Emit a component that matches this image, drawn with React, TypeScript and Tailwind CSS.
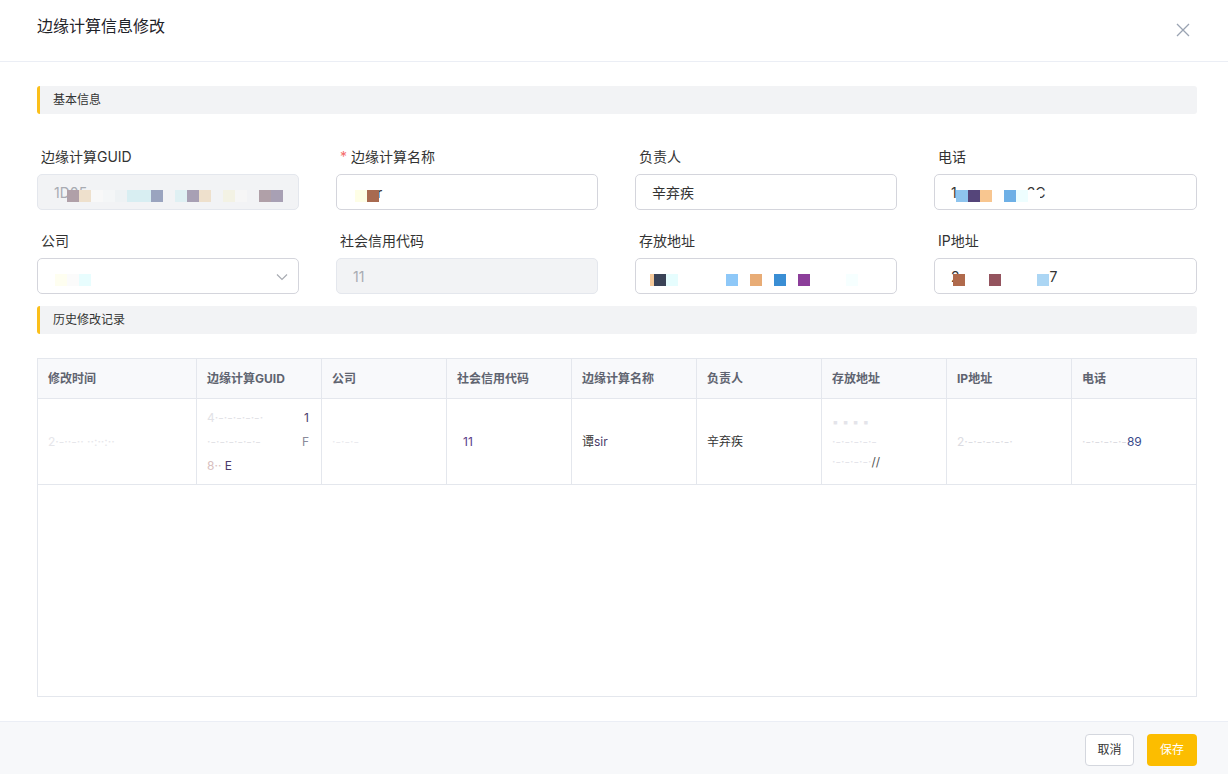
import React from "react";

const font = { fontFamily: '"Inter","Noto Sans CJK SC","Noto Sans",sans-serif' };

type Blk = [number, string];

function Mosaic({ start, blocks }: { start: number; blocks: Blk[] }) {
  return (
    <>
      {blocks.map(([x, c], i) => (
        <span
          key={i}
          className="absolute top-[15px] h-[12px] w-[12px]"
          style={{ left: x - start, backgroundColor: c }}
        />
      ))}
    </>
  );
}

function SectionTitle({ children }: { children: React.ReactNode }) {
  return (
    <div className="flex h-[28px] items-center rounded-[3px] border-l-[3px] border-[#fbbf1a] bg-[#f2f3f5] pl-[13px] text-[12px] text-[#333]">
      {children}
    </div>
  );
}

function Field({
  label,
  required,
  disabled,
  children,
  select,
}: {
  label: string;
  required?: boolean;
  disabled?: boolean;
  children?: React.ReactNode;
  select?: boolean;
}) {
  return (
    <div className="flex flex-col">
      <div className="flex h-[20px] items-center pl-[4px] text-[14px] text-[#333]">
        {required && <span className="mr-[4px] text-[#f56c6c]">*</span>}
        {label}
      </div>
      <div
        className={
          "relative mt-[8px] flex h-[36px] items-center rounded-[5px] border pl-[16px] text-[14px] " +
          (disabled ? "border-[#e4e7ed] bg-[#f2f3f5] text-[#a8abb2]" : "border-[#d4d5dc] bg-white text-[#333]")
        }
      >
        {children}
        {select && (
          <svg className="absolute right-[10px] top-[14px]" width="12" height="8" viewBox="0 0 12 8">
            <path d="M1 1.5 L6 6.5 L11 1.5" fill="none" stroke="#a8abb2" strokeWidth="1.2" />
          </svg>
        )}
      </div>
    </div>
  );
}

const heads = ["修改时间", "边缘计算GUID", "公司", "社会信用代码", "边缘计算名称", "负责人", "存放地址", "IP地址", "电话"];

export default function App() {
  return (
    <div className="flex h-[774px] w-[1228px] flex-col bg-white" style={font}>
      {/* header */}
      <div className="flex h-[62px] shrink-0 items-start justify-between border-b border-[#ebeef5] pl-[37px] pr-[38px] pt-[15px]">
        <div className="text-[16px] leading-[22px] text-[#1f2329]">边缘计算信息修改</div>
        <svg className="mt-[8px]" width="14" height="14" viewBox="0 0 14 14">
          <path d="M1 1 L13 13 M13 1 L1 13" stroke="#9aa3b2" strokeWidth="1.3" />
        </svg>
      </div>

      {/* body */}
      <div className="flex flex-1 flex-col pl-[37px] pr-[31px] pt-[24px]">
        <SectionTitle>基本信息</SectionTitle>

        <div className="mt-[32px] grid grid-cols-[262px_262px_262px_263px] gap-x-[37px] gap-y-[20px]">
          <Field label="边缘计算GUID" disabled>
            <span>1D05</span>
            <Mosaic
              start={37}
              blocks={[
                [66, "#b0a0a8"],
                [78, "#eee0cc"],
                [90, "#f8f8f8"],
                [102, "#f4f6f7"],
                [114, "#eef2f4"],
                [126, "#d8eef2"],
                [138, "#d8eef2"],
                [150, "#9aa4bf"],
                [162, "#f2f3f5"],
                [174, "#dff0f3"],
                [186, "#a8a0b4"],
                [198, "#eee0cc"],
                [210, "#f2f3f5"],
                [222, "#f3f2e4"],
                [234, "#f6f6f6"],
                [246, "#f2f3f5"],
                [258, "#b0a0a8"],
                [270, "#a8a0b4"],
              ]}
            />
          </Field>
          <Field label="边缘计算名称" required>
            <span className="pl-[24px]">r</span>
            <Mosaic start={336} blocks={[[354, "#fefee6"], [366, "#a86a50"]]} />
          </Field>
          <Field label="负责人">
            <span>辛弃疾</span>
          </Field>
          <Field label="电话">
            <span>1</span>
            <span className="pl-[70px] text-[#333]">3C</span>
            <Mosaic
              start={934}
              blocks={[
                [955, "#8ec4ee"],
                [967, "#55457a"],
                [979, "#f8c690"],
                [1003, "#6eb0e6"],
                [1015, "#eefeff"],
                [1027, "#ffffff"],
              ]}
            />
          </Field>
          <Field label="公司" select>
            <Mosaic start={37} blocks={[[54, "#fefef0"], [66, "#fbfbfb"], [78, "#e8fdfe"]]} />
          </Field>
          <Field label="社会信用代码" disabled>
            <span>11</span>
          </Field>
          <Field label="存放地址">
            <Mosaic
              start={635}
              blocks={[
                [649, "#f5c99a"],
                [653, "#3a4256"],
                [665, "#e6fdfe"],
                [725, "#8ec8f8"],
                [749, "#e8ac76"],
                [773, "#3a8ed4"],
                [797, "#8c3e9a"],
                [845, "#f6ffff"],
              ]}
            />
          </Field>
          <Field label="IP地址">
            <span>2</span>
            <span className="pl-[90px]">7</span>
            <Mosaic start={934} blocks={[[952, "#b06a4c"], [988, "#94545e"], [1036, "#acd6f4"]]} />
          </Field>
        </div>

        <div className="mt-[12px]">
          <SectionTitle>历史修改记录</SectionTitle>
        </div>

        {/* table */}
        <div className="mt-[24px] h-[339px] border border-[#e4e7ed]">
          <div className="grid h-[40px] grid-cols-[159px_repeat(8,125px)] border-b border-[#e4e7ed] bg-[#f8f9fb]">
            {heads.map((h, i) => (
              <div
                key={h}
                className={
                  "flex items-center pl-[10px] text-[12px] font-bold text-[#5f6470] " +
                  (i < 8 ? "border-r border-[#e4e7ed]" : "")
                }
              >
                {h}
              </div>
            ))}
          </div>
          <div className="grid h-[86px] grid-cols-[159px_repeat(8,125px)] border-b border-[#e4e7ed] text-[12px]">
            <div className="flex items-center border-r border-[#e4e7ed] pl-[10px] text-[#e6e6ea]">2·-··-·· ··:··:··</div>
            <div className="flex flex-col justify-center border-r border-[#e4e7ed] pl-[10px] pr-[12px] leading-[24px]">
              <div className="flex justify-between text-[#e2e2e6]">
                <span>4·-·-·-·-·-·</span>
                <span className="text-[#4a3a6a]">1</span>
              </div>
              <div className="flex justify-between text-[#e2e2e6]">
                <span>·-·-·-·-·-·-</span>
                <span className="text-[#8a8a9a]">F</span>
              </div>
              <div className="text-[#4a3a6a]">
                <span className="text-[#d8c0c0]">8··</span> E
              </div>
            </div>
            <div className="flex items-center border-r border-[#e4e7ed] pl-[10px] text-[#eaeaee]">·-·-·-</div>
            <div className="flex items-center border-r border-[#e4e7ed] pl-[16px] text-[#5a3a86]">11</div>
            <div className="flex items-center border-r border-[#e4e7ed] pl-[10px] text-[#333]">
              谭<span className="text-[#4a3a6a]">sir</span>
            </div>
            <div className="flex items-center border-r border-[#e4e7ed] pl-[10px] text-[#333]">辛弃疾</div>
            <div className="flex flex-col justify-center border-r border-[#e4e7ed] pl-[10px] leading-[20px] text-[#e4e4ea]">
              <span>▪ ▪ ▪ ▪</span>
              <span>·-·-·-·-·-</span>
              <span>
                ·-·-·-·-·<span className="text-[#555]">//</span>
              </span>
            </div>
            <div className="flex items-center border-r border-[#e4e7ed] pl-[10px] text-[#dcdce2]">2·-·-·-·-·-·</div>
            <div className="flex items-center pl-[10px] text-[#dcdce2]">
              ·-·-·-·-·-<span className="text-[#3a4a8a]">89</span>
            </div>
          </div>
        </div>
      </div>

      {/* footer */}
      <div className="mt-[24px] flex h-[53px] shrink-0 items-center justify-end gap-[13px] border-t border-[#ebeef5] bg-[#f7f8fa] pr-[31px] pt-[3px]">
        <button className="h-[32px] w-[49px] rounded-[4px] border border-[#d4d7de] bg-white text-[12px] text-[#333]">
          取消
        </button>
        <button className="h-[32px] w-[50px] rounded-[4px] bg-[#fcbd00] text-[12px] text-white">保存</button>
      </div>
    </div>
  );
}
